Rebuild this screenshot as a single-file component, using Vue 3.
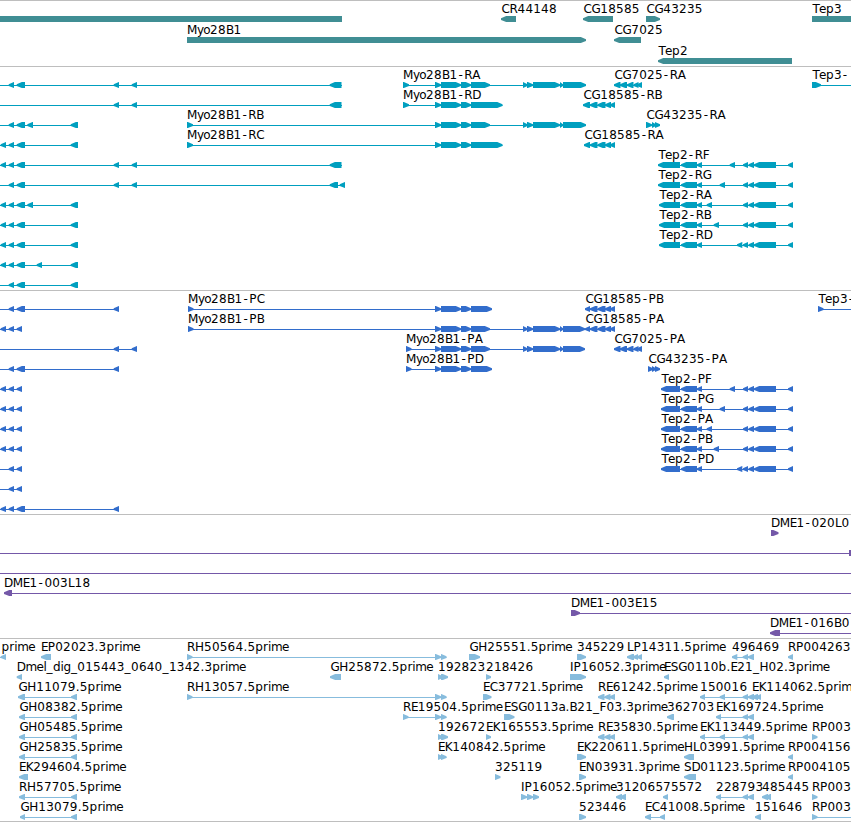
<script setup>
// Each feature: [row, direction (L, R or N), label, spans, line start?, line end?]
const PITCH = 20
const L1 = [0.7, 6], L2 = [8.7, 14], L3 = [16.7, 25], L3s = [16.7, 22]
const U1 = [113.7, 119], U2 = [131.7, 137], W = [70.7, 78], X = [329.7, 341.5]
const myoHead = [[435, 441], [441, 461], [461, 471]]
const myoLong = end => [...myoHead, [471, 490], [523, 527.5], [527, 533], [533, 560], [560, 563], [563, end]]
const cg7025 = [[614, 620.5], [620, 627], [627, 633.5], [633.5, 638.5], [637, 642]]
const cg18585 = x => [[x, 590], [590, 597.5], [597.5, 605.5], [605, 611], [610, 615]]
const tep2 = (x, v) => [[x, 680], [681, 697], [697, 702], [v, v + 5.3], [743, 748], [748.5, 754], [754, 776], [788, 793]]

const genes = [
  [0, 'N', '', [[0, 342]]], [0, 'L', 'CR44148', [[501, 516]]],
  [0, 'L', 'CG18585', [[583, 613]]], [0, 'R', 'CG43235', [[646, 660]]],
  [0, 'N', 'Tep3', [[812, 851]]], [1, 'R', 'Myo28B1', [[187, 586]]],
  [1, 'L', 'CG7025', [[614, 641]]], [2, 'L', 'Tep2', [[658, 792]]],
]
const transcripts = [
  [0, 'L', '', [L2, L3, U1, U2, X], 0, 342],
  [1, 'L', '', [U1, U2, X], 0, 342],
  [2, 'L', '', [L2, L3, [27.3, 33], W], 0],
  [3, 'L', '', [L1, L2, L3, W], 0],
  [4, 'L', '', [L1, L2, L3, U1, U2, X], 0, 342],
  [5, 'L', '', [L2, L3, U1, U2, [329.7, 338], [339.7, 345]], 0],
  [6, 'L', '', [L1, L2, L3, [27.3, 33], W], 0],
  [7, 'L', '', [L1, L2, L3, W], 0],
  [8, 'L', '', [L1, L2, L3, W], 0],
  [9, 'L', '', [L1, L2, L3, [36.7, 42], W], 0],
  [10, 'L', '', [L2, L3, W], 0],
  [0, 'R', 'Myo28B1-RA', [[403, 409], ...myoLong(586)]],
  [1, 'R', 'Myo28B1-RD', [[403, 409], ...myoHead, [471, 502.5]]],
  [2, 'R', 'Myo28B1-RB', [[187, 193], ...myoLong(586)]],
  [3, 'R', 'Myo28B1-RC', [[187, 193], ...myoHead, [471, 502.5]]],
  [0, 'L', 'CG7025-RA', cg7025],
  [1, 'L', 'CG18585-RB', cg18585(583)],
  [2, 'R', 'CG43235-RA', [[646, 652], [652, 656], [655, 660]]],
  [3, 'L', 'CG18585-RA', cg18585(584)],
  [4, 'L', 'Tep2-RF', tep2(658, 729.7)],
  [5, 'L', 'Tep2-RG', tep2(658, 719.7)],
  [6, 'L', 'Tep2-RA', tep2(659, 706.7)],
  [7, 'L', 'Tep2-RB', tep2(659, 713.7)],
  [8, 'L', 'Tep2-RD', tep2(659, 737)],
  [0, 'R', 'Tep3-', [[812, 821]], 812, 851],
]
const proteins = [
  [0, 'L', '', [L2, L3, U1], 0],
  [1, 'L', '', [L1, L2, L3s], 0],
  [2, 'L', '', [U1, U2], 0],
  [3, 'L', '', [L2, L3, U1], 0],
  [4, 'L', '', [L1, L2, L3s], 0],
  [5, 'L', '', [L1, L2, L3s], 0],
  [6, 'L', '', [L1, L2, L3s], 0],
  [7, 'L', '', [L1, L2, L3s], 0],
  [8, 'L', '', [L2, L3s], 0],
  [9, 'L', '', [L2, L3s], 0],
  [10, 'L', '', [L1, L2, L3, U1], 0],
  [0, 'R', 'Myo28B1-PC', [[188, 193.5], ...myoHead, [471, 492]]],
  [1, 'R', 'Myo28B1-PB', [[188, 193.5], ...myoLong(585)]],
  [2, 'R', 'Myo28B1-PA', [[406, 411.5], ...myoLong(585)]],
  [3, 'R', 'Myo28B1-PD', [[406, 411.5], ...myoHead, [471, 492]]],
  [0, 'L', 'CG18585-PB', cg18585(585)],
  [1, 'L', 'CG18585-PA', cg18585(585)],
  [2, 'L', 'CG7025-PA', cg7025],
  [3, 'R', 'CG43235-PA', [[648, 653], [652, 656], [655, 660]]],
  [4, 'L', 'Tep2-PF', tep2(661, 729.7)],
  [5, 'L', 'Tep2-PG', tep2(661, 719.7)],
  [6, 'L', 'Tep2-PA', tep2(661, 706.7)],
  [7, 'L', 'Tep2-PB', tep2(661, 713.7)],
  [8, 'L', 'Tep2-PD', tep2(661, 737)],
  [0, 'R', 'Tep3-', [[818, 823.5]], 818, 851],
]
const clones = [
  [0, 'R', 'DME1-020L0', [[771, 778.5]]],
  [1, 'N', '', [[849, 851]], 0, 851],
  [2, 'N', '', [], 0, 851],
  [3, 'L', 'DME1-003L18', [[4, 12]], 4, 851],
  [4, 'R', 'DME1-003E15', [[571, 580]], 571, 851],
  [5, 'L', 'DME1-016B0', [[770, 780]], 770, 851],
]
const T = [71, 77]
const re = [[598, 604.5], [604.5, 610.5], [609.5, 615]]
const ends = [[742.7, 748], [748, 754]]
const rh = [[187, 192.5], [435, 441], [441, 446.5]]
const ests = [
  [0, 'L', 'prime', [[0.7, 6]], 0], [0, 'L', 'EP02023.3prime', [[41, 51]]],
  [0, 'R', 'RH50564.5prime', rh], [0, 'R', 'GH25551.5prime', [[469, 480]]],
  [0, 'R', '345229', [[577, 586]]], [0, 'L', 'LP14311.5prime', [[627, 634], [633, 638], [637, 642]]],
  [0, 'L', '496469', [[732, 737.3], ...ends]], [0, 'L', 'RP004263', [[788, 793]]],
  [1, 'L', 'Dmel_dig_015443_0640_1342.3prime', [[16.7, 22]]],
  [1, 'L', 'GH25872.5prime', [[330, 341]]], [1, 'R', '192823', [[438, 443], [441, 448]]],
  [1, 'R', '218426', [[486, 491]]], [1, 'R', 'IP16052.3prime', [[570, 586]]],
  [1, 'L', 'ESG0110b.E21_H02.3prime', [[664, 669]]],
  [2, 'L', 'GH11079.5prime', [[18, 25], T]], [2, 'R', 'RH13057.5prime', rh],
  [2, 'R', 'EC37721.5prime', [[483, 491.5]]], [2, 'L', 'RE61242.5prime', re],
  [2, 'L', '150016', [[700, 705], [719.7, 725], ...ends]],
  [2, 'L', 'EK114062.5prim', [[752, 758], [756, 761]]],
  [3, 'L', 'GH08382.5prime', [[19, 25], T]],
  [3, 'R', 'RE19504.5prime', [[403, 408.5], [435, 441], [441, 446.5]]],
  [3, 'R', 'ESG0113a.B21_F03.3prime', [[504, 514.5]]], [3, 'L', '362703', [[667, 674]]],
  [3, 'L', 'EK169724.5prime', [[716, 721], ...ends]],
  [4, 'L', 'GH05485.5prime', [[19, 25], T]], [4, 'R', '192672', [[438, 443], [441, 448]]],
  [4, 'R', 'EK165553.5prime', [[486, 491]]], [4, 'L', 'RE35830.5prime', re],
  [4, 'L', 'EK113449.5prime', [[700, 705], [719.7, 725], ...ends]],
  [4, 'R', 'RP003', [[812, 817.5]]],
  [5, 'L', 'GH25835.5prime', [[19, 25], T]], [5, 'R', 'EK140842.5prime', [[438, 443], [441, 446.5]]],
  [5, 'R', 'EK220611.5prime', [[577, 586]]], [5, 'L', 'HL03991.5prime', [[684, 694]]],
  [5, 'L', 'RP004156', [[788, 793]]],
  [6, 'L', 'EK294604.5prime', [[19, 28]]], [6, 'R', '325119', [[495, 500.5]]],
  [6, 'R', 'EN03931.3prime', [[579, 586]]], [6, 'L', 'SD01123.5prime', [[684, 696]]],
  [6, 'L', 'RP004105', [[788, 793]]],
  [7, 'L', 'RH57705.5prime', [[19, 25], T]], [7, 'R', 'IP16052.5prime', [[521, 527], [527, 533], [533, 539]]],
  [7, 'L', '312065', [[616, 622], [620, 626]]], [7, 'L', '75572', [[663, 668]]],
  [7, 'L', '228793', [[716, 721], ...ends]], [7, 'L', '485445', [[762, 768], [765, 771]]],
  [7, 'R', 'RP003', [[812, 817.5]]],
  [8, 'L', 'GH13079.5prime', [[20, 25], T]], [8, 'R', '523446', [[579, 586]]],
  [8, 'L', 'EC41008.5prime', [[645, 651], [660, 665]]], [8, 'L', '151646', [[755, 761]]],
  [8, 'R', 'RP003', [[812, 817.5]], 812, 851],
]

const tracks = [
  { id: 'genes', name: 'gene', pitch: 21, height: 65, items: genes },
  { id: 'transcripts', name: 'transcript', pitch: PITCH, height: 223, items: transcripts },
  { id: 'proteins', name: 'protein', pitch: PITCH, height: 223, items: proteins },
  { id: 'clones', name: 'clone', pitch: PITCH, height: 123, items: clones },
  { id: 'ests', name: 'est', pitch: PITCH, height: 182, items: ests },
]

// Glyph advances in pixels, with digits set slightly wide; unlisted glyphs are digits
const ADV = { '.': 4, '-': 6.9, _: 6.4, M: 10, y: 6.3, o: 6.8, T: 6.6, e: 7, p: 7.8, r: 4.9, i: 3, m: 11, l: 3, d: 7.5, g: 7.5,
  a: 7, b: 7.8, B: 7.7, C: 8, D: 8.8, E: 6.8, F: 7, G: 8.8, H: 9, I: 3.5, K: 7.5, L: 6.5, N: 9, P: 7.4, R: 8, S: 7.5, A: 8 }
function glyphX(text, x) {
  let at = x
  return [...text].map(c => {
    const here = c === '-' ? at + 1 : at
    at += ADV[c] ?? 7.88
    return +here.toFixed(1)
  }).join(' ')
}
// Arrow heads end in a slightly blunt tip
function shape(dir, [a, b], y) {
  const h = Math.min(5.2, b - a), t = y + 2.3, u = y + 3.9, e = y + 6
  if (dir === 'L') return `${a},${t} ${a + h},${y} ${b},${y} ${b},${e} ${a + h},${e} ${a},${u}`
  if (dir === 'R') return `${a},${y} ${b - h},${y} ${b},${t} ${b},${u} ${b - h},${e} ${a},${e}`
  return `${a},${y} ${b},${y} ${b},${e} ${a},${e}`
}
const drawn = tracks.map(t => ({
  ...t,
  items: t.items.map(([row, dir, label, spans, from, to]) => {
    const y = 15 + row * t.pitch
    const x0 = from ?? spans[0][0]
    const x1 = to ?? spans[spans.length - 1][1]
    return { label, y, x0, width: x1 - x0, line: spans.length !== 1 || from !== undefined,
      xs: glyphX(label, label === 'prime' ? 1.5 : (spans[0]?.[0] ?? 0) + (/^[CGT]/.test(label) ? 0.5 : 0)),
      shapes: spans.map(s => shape(dir, s, y)) }
  }),
}))
</script>

<template>
  <main class="browser">
    <section v-for="t in drawn" :key="t.id" class="track" :class="t.name">
      <svg class="lane" width="851" :height="t.height">
        <g v-for="(f, i) in t.items" :key="i">
          <text v-if="f.label" :x="f.xs" :y="f.y - 3">{{ f.label }}</text>
          <rect v-if="f.line" :x="f.x0" :y="f.y + 3" :width="f.width" height="1" />
          <polygon v-for="(p, j) in f.shapes" :key="j" :points="p" />
        </g>
      </svg>
    </section>
  </main>
</template>

<style>
body { background: #fff; }
</style>

<style scoped>
.browser {
  display: flex;
  flex-direction: column;
  width: 851px;
  border-bottom: 1px solid #bebebe;
  overflow: hidden;
}
.track { border-top: 1px solid #bebebe; }
.lane { display: block; }
text {
  font: 12px "DejaVu Sans", sans-serif;
  fill: #000;
}
.gene { fill: #408e94; }
.transcript { fill: #009fbf; }
.protein { fill: #326dcc; }
.clone { fill: #7458a8; }
.est { fill: #87bcdd; }
</style>
